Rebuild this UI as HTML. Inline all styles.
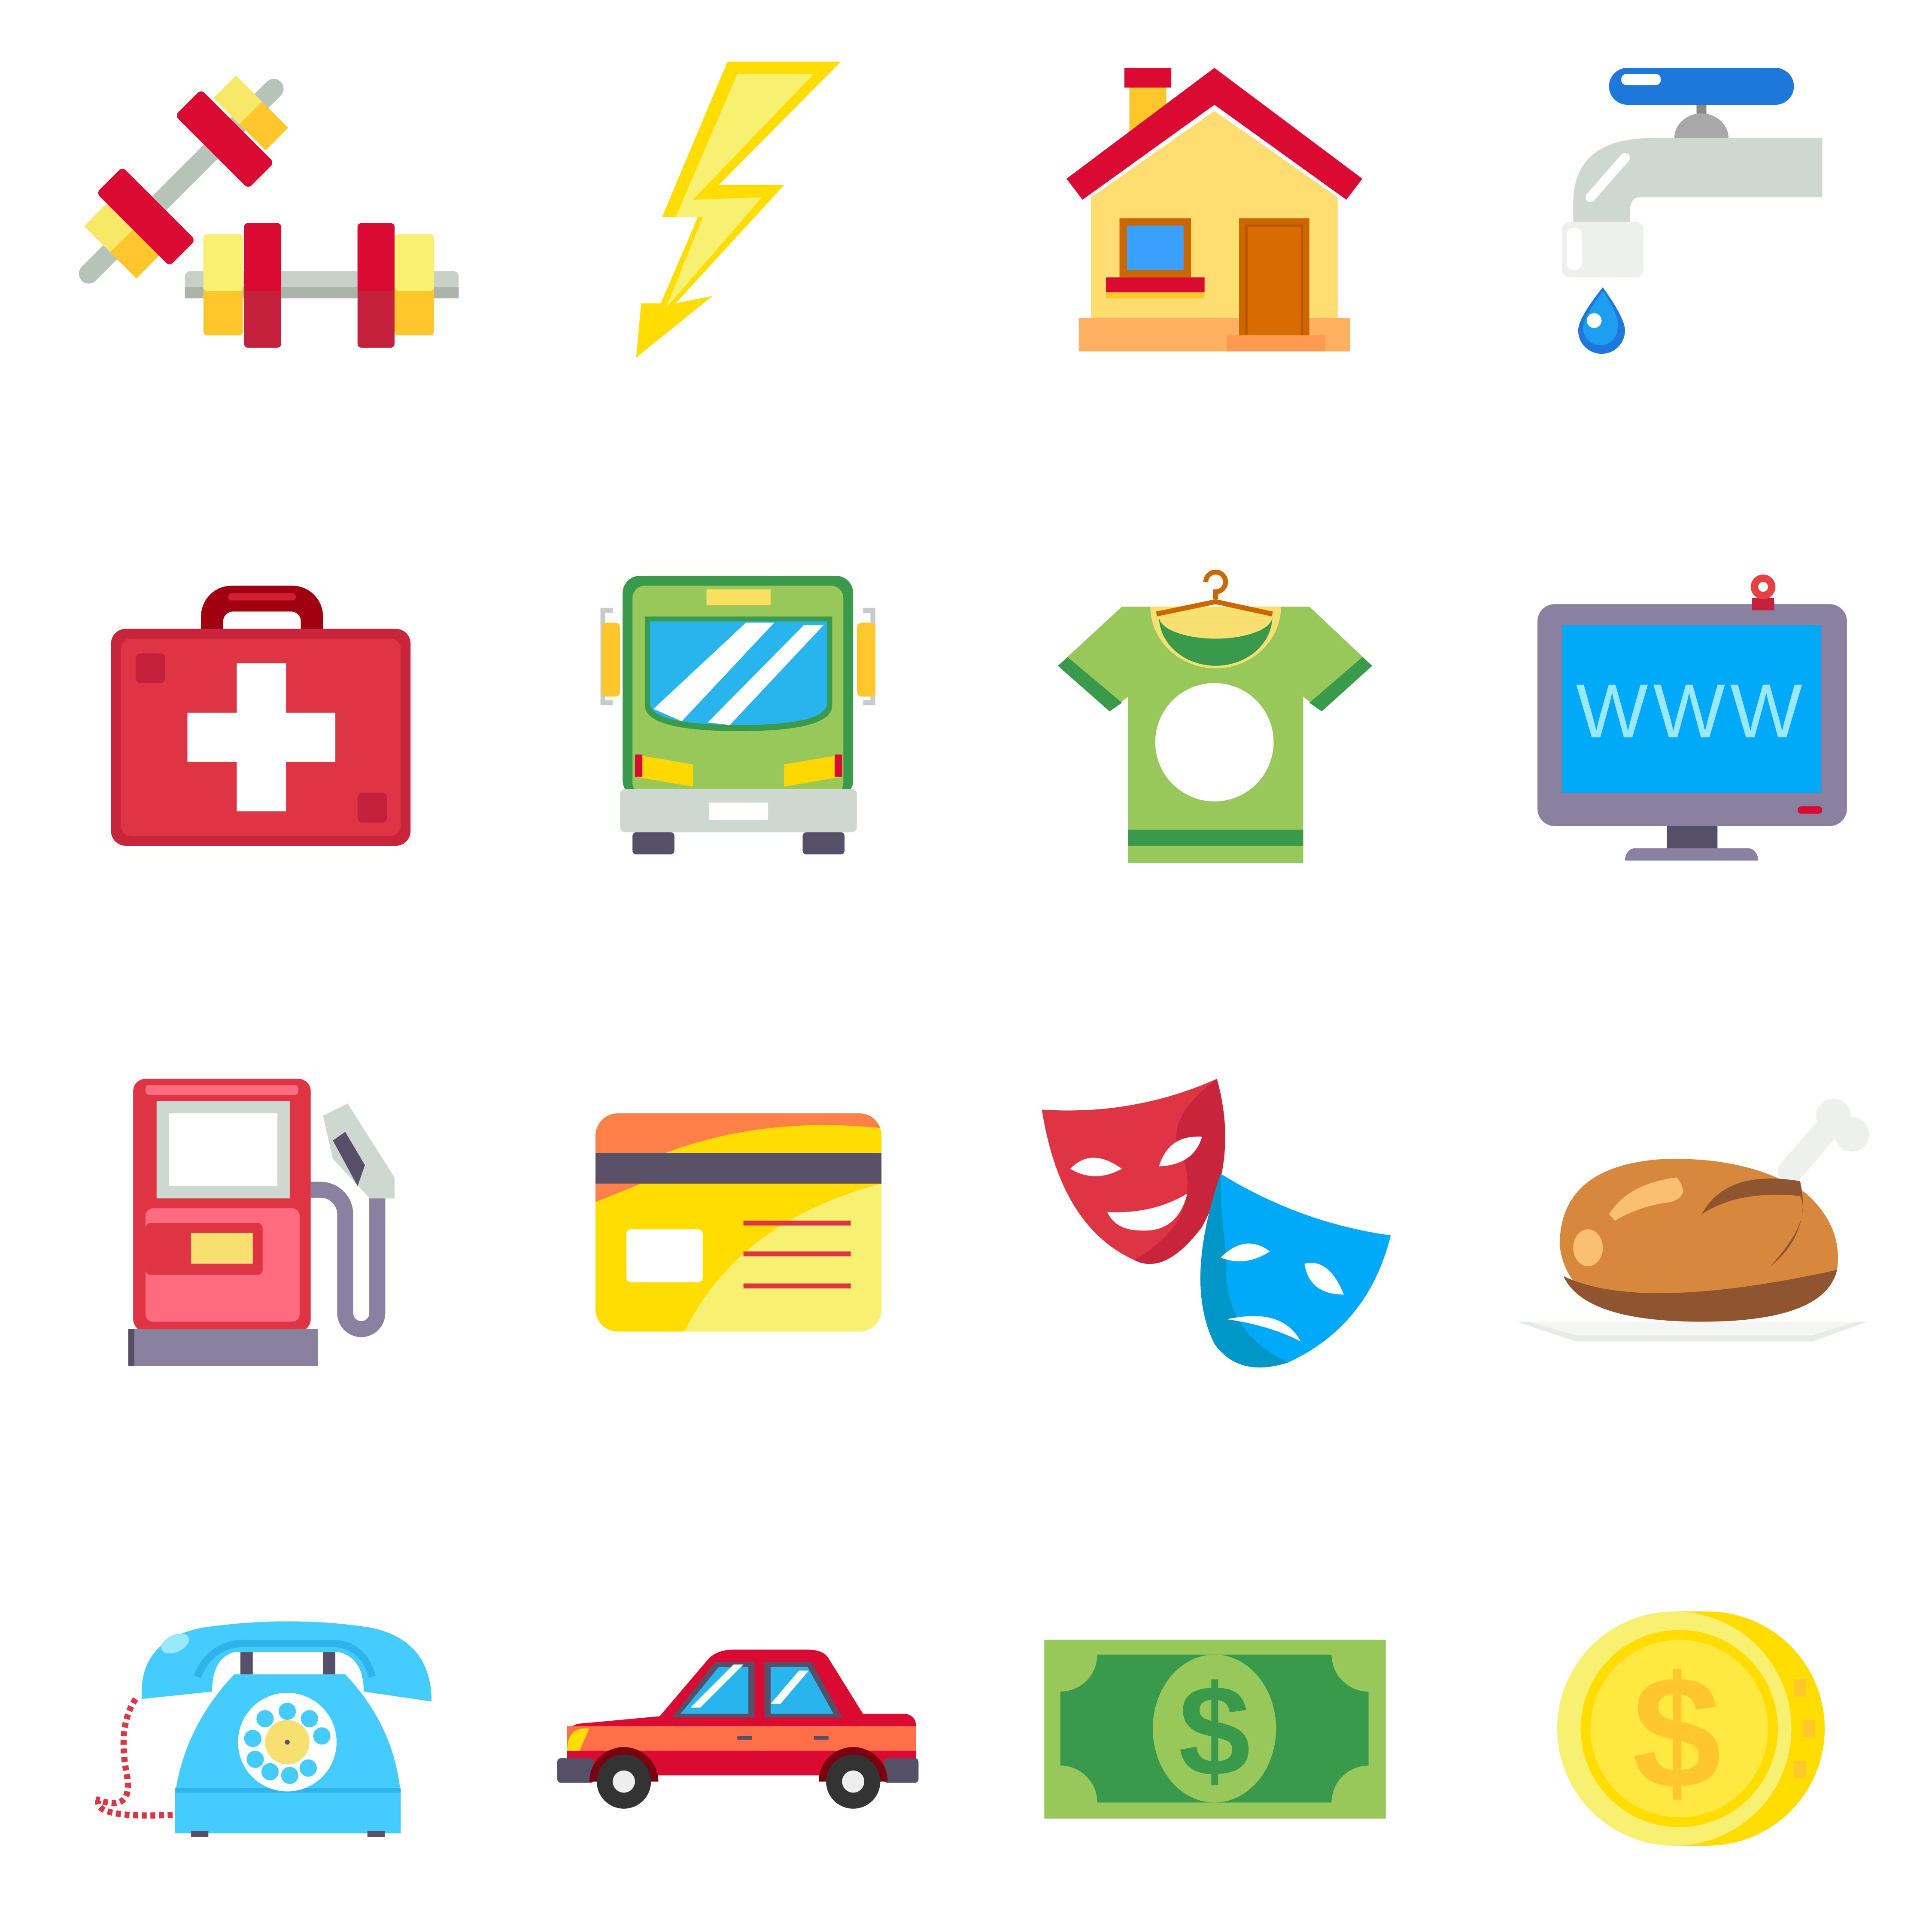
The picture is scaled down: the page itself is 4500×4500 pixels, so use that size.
<!DOCTYPE html>
<html><head><meta charset="utf-8"><style>
html,body{margin:0;padding:0;background:#fff;}
svg{display:block;}
</style></head><body>
<svg width="4500" height="4500" viewBox="0 0 1567 1567" xmlns="http://www.w3.org/2000/svg">
<rect width="1570" height="1570" fill="#fff"/>

<!-- Dumbbells -->
<g>
  <line x1="72" y1="222" x2="222" y2="72" stroke="#B7C2B8" stroke-width="16" stroke-linecap="round"/>
  <g transform="rotate(-45 112 182)">
    <rect x="80" y="152" width="26" height="60" fill="#F8E868"/>
    <rect x="80" y="182" width="26" height="30" fill="#FFC72C"/>
    <rect x="106" y="140" width="30" height="84" rx="4" fill="#DA0A32"/>
  </g>
  <g transform="rotate(-45 185 110)">
    <rect x="198" y="80" width="26" height="60" fill="#F8E868"/>
    <rect x="198" y="110" width="26" height="30" fill="#FFC72C"/>
    <rect x="166" y="68" width="30" height="84" rx="4" fill="#DA0A32"/>
  </g>
  <rect x="150" y="220" width="222" height="22" rx="4" fill="#C9D0C8"/>
  <rect x="150" y="233" width="222" height="9" fill="#AAB4AA"/>
  <rect x="165" y="190" width="32" height="82" rx="3" fill="#FFC72C"/>
  <rect x="165" y="190" width="32" height="46" rx="3" fill="#F8F070"/>
  <rect x="198" y="181" width="30" height="101" rx="3" fill="#C4203C"/>
  <rect x="198" y="181" width="30" height="55" rx="3" fill="#DA0A32"/>
  <rect x="290" y="181" width="30" height="101" rx="3" fill="#C4203C"/>
  <rect x="290" y="181" width="30" height="55" rx="3" fill="#DA0A32"/>
  <rect x="320" y="190" width="32" height="82" rx="3" fill="#FFC72C"/>
  <rect x="320" y="190" width="32" height="46" rx="3" fill="#F8F070"/>
</g>

<!-- Lightning -->
<polygon points="590,50 682,50 583,150 636,150 548,246 578,240 516,290 520,246 536,246 566,176 537,176" fill="#FFDD00"/>
<polygon points="598,60 660,60 562,162 618,160 540,250 570,176 548,176" fill="#F8F070"/>

<!-- House -->
<g>
  <rect x="916" y="68" width="30" height="40" fill="#FFC72C"/>
  <rect x="912" y="55" width="38" height="16" fill="#DA0A32"/>
  <polygon points="885,160 985,90 1085,160 1085,262 885,262" fill="#FFDD70"/>
  <rect x="875" y="258" width="220" height="27" fill="#FFB060"/>
  <polygon points="865,145 985,55 1105,145 1092,162 985,85 878,162" fill="#DA0A32"/>
  <rect x="908" y="177" width="58" height="48" fill="#CC6600"/>
  <rect x="914" y="183" width="46" height="36" fill="#3AA0FF"/>
  <rect x="897" y="225" width="80" height="12" fill="#DA0A32"/>
  <rect x="897" y="237" width="80" height="5" fill="#FFC72C"/>
  <rect x="1005" y="177" width="57" height="98" fill="#CC6600"/>
  <rect x="1011" y="183" width="45" height="92" fill="#D86C00" stroke="#B85800" stroke-width="2"/>
  <rect x="995" y="272" width="80" height="13" fill="#FF9A50"/>
</g>

<!-- Faucet -->
<g>
  <rect x="1305" y="55" width="150" height="30" rx="15" fill="#1E78DC"/>
  <rect x="1315" y="60" width="32" height="9" rx="4" fill="#fff"/>
  <rect x="1376" y="85" width="8" height="10" fill="#888"/>
  <path d="M1358,112 a22,20 0 0 1 44,0 z" fill="#A8A8A8"/>
  <path d="M1340,112 H1478 V160 H1330 Q1322,160 1322,172 V182 H1276 V165 Q1276,112 1340,112 z" fill="#CFD8D0"/>
  <path d="M1290,160 L1318,128" stroke="#fff" stroke-width="8" stroke-linecap="round"/>
  <rect x="1267" y="180" width="66" height="45" rx="6" fill="#EEF0EE"/>
  <rect x="1271" y="185" width="12" height="34" rx="5" fill="#fff"/>
  <path d="M1300,233 Q1280,258 1280,268 a19,19 0 0 0 38,0 Q1318,258 1300,233 z" fill="#1E78DC"/>
  <path d="M1300,236 Q1284,258 1284,266 a14,14 0 0 0 28,0 Q1314,256 1300,236 z" fill="#1E9EF0"/>
  <circle cx="1293" cy="260" r="6" fill="#fff"/>
</g>

<!-- First aid -->
<g>
  <path d="M163,512 V500 a25,25 0 0 1 25,-25 h49 a25,25 0 0 1 25,25 v12 h-18 v-8 a8,8 0 0 0 -8,-8 h-47 a8,8 0 0 0 -8,8 v8 z" fill="#A00010"/>
  <rect x="185" y="481" width="55" height="6" rx="3" fill="#D02030"/>
  <rect x="90" y="510" width="243" height="176" rx="12" fill="#C8243C"/>
  <rect x="98" y="518" width="227" height="160" rx="8" fill="#DE3444"/>
  <rect x="110" y="530" width="24" height="24" rx="4" fill="#C4203C"/>
  <rect x="290" y="643" width="24" height="24" rx="4" fill="#C4203C"/>
  <rect x="192" y="538" width="40" height="120" fill="#fff"/>
  <rect x="152" y="578" width="120" height="40" fill="#fff"/>
</g>

<!-- Bus -->
<g>
  <path d="M497,495 h-8 v75 h8" fill="none" stroke="#C8CCC8" stroke-width="4"/>
  <path d="M700,495 h8 v75 h-8" fill="none" stroke="#C8CCC8" stroke-width="4"/>
  <rect x="488" y="505" width="15" height="60" rx="4" fill="#FFC72C"/>
  <rect x="695" y="505" width="15" height="60" rx="4" fill="#FFC72C"/>
  <rect x="505" y="467" width="187" height="180" rx="14" fill="#3A9A4C"/>
  <rect x="513" y="475" width="171" height="170" rx="10" fill="#98C85A"/>
  <rect x="573" y="478" width="52" height="13" fill="#F8E060"/>
  <path d="M523,500 H675 V572 Q675,593 600,593 Q523,593 523,572 z" fill="#3A9A4C"/>
  <path d="M527,504 H671 V570 Q671,588 600,588 Q527,588 527,570 z" fill="#28B4EC"/>
  <polygon points="530,575 605,505 628,505 553,585" fill="#fff"/>
  <polygon points="574,586 652,507 668,507 592,588" fill="#fff"/>
  <polygon points="515,612 562,620 562,638 515,630" fill="#FFD800"/>
  <rect x="515" y="612" width="6" height="18" fill="#DA0A32"/>
  <polygon points="683,612 636,620 636,638 683,630" fill="#FFD800"/>
  <rect x="677" y="612" width="6" height="18" fill="#DA0A32"/>
  <rect x="503" y="640" width="192" height="35" rx="4" fill="#CFD8D0"/>
  <rect x="575" y="651" width="48" height="14" fill="#fff"/>
  <rect x="513" y="675" width="34" height="18" rx="3" fill="#555067"/>
  <rect x="651" y="675" width="34" height="18" rx="3" fill="#555067"/>
</g>

<!-- T-shirt -->
<g>
  <polygon points="910,492 1062,492 1113,540 1072,577 1057,565 1057,700 915,700 915,565 900,577 858,540" fill="#98C85A"/>
  <polygon points="858,540 866,533 910,570 900,577" fill="#3A9A4C"/>
  <polygon points="1113,540 1105,533 1062,570 1072,577" fill="#3A9A4C"/>
  <rect x="915" y="673" width="142" height="13" fill="#3A9A4C"/>
  <path d="M933,492 a53,50 0 0 0 106,0 z" fill="#F8E070"/>
  <path d="M940,500 a46,40 0 0 0 92,0 z" fill="#3A9A4C"/>
  <path d="M940,500 a46,18 0 0 0 92,0 z" fill="#F8E070"/>
  <path d="M986,486 v-6 a8,8 0 1 0 -8,-8" fill="none" stroke="#CC6600" stroke-width="4"/>
  <path d="M938,498 L986,488 L1032,498" fill="none" stroke="#CC6600" stroke-width="4"/>
  <circle cx="985" cy="602" r="48" fill="#fff"/>
</g>

<!-- Monitor -->
<g>
  <rect x="1352" y="668" width="41" height="22" fill="#555067"/>
  <path d="M1318,698 a8,10 0 0 1 8,-10 h92 a8,10 0 0 1 8,10 z" fill="#8A80A0"/>
  <rect x="1247" y="490" width="251" height="180" rx="14" fill="#8A80A0"/>
  <rect x="1267" y="507" width="210" height="136" fill="#00AAF8"/>
  <text x="1372" y="598" font-family="Liberation Sans, sans-serif" font-size="62" fill="#9AE8FF" text-anchor="middle" letter-spacing="4">WWW</text>
  <rect x="1458" y="654" width="20" height="6" rx="3" fill="#DA0A32"/>
  <rect x="1421" y="485" width="18" height="10" fill="#C4203C"/>
  <circle cx="1430" cy="476" r="10" fill="#E84040"/>
  <circle cx="1430" cy="476" r="4" fill="#fff"/>
</g>

<!-- Gas pump -->
<g>
  <path d="M252,965 h8 a20,20 0 0 1 20,20 v80 a13,13 0 0 0 26,0 V965" fill="none" stroke="#8A80A0" stroke-width="13"/>
  <polygon points="262,905 282,895 320,955 320,972 300,972 270,940" fill="#CFD8D0"/>
  <polygon points="270,925 280,918 296,945 290,962" fill="#555067"/>
  <rect x="108" y="875" width="144" height="205" rx="10" fill="#DE3444"/>
  <rect x="118" y="880" width="124" height="8" rx="3" fill="#FF6B7E"/>
  <rect x="127" y="893" width="108" height="79" fill="#CFD8D0"/>
  <rect x="137" y="903" width="88" height="59" fill="#fff"/>
  <rect x="118" y="980" width="125" height="92" rx="6" fill="#FF6B7E"/>
  <rect x="118" y="992" width="95" height="42" rx="4" fill="#DE3444"/>
  <rect x="155" y="1000" width="50" height="25" fill="#F8E070"/>
  <rect x="104" y="1078" width="154" height="30" fill="#8A80A0"/>
  <rect x="104" y="1078" width="5" height="30" fill="#555067"/>
</g>

<!-- Credit card -->
<g>
  <clipPath id="cc"><rect x="483" y="903" width="232" height="177" rx="18"/></clipPath>
  <g clip-path="url(#cc)">
    <rect x="483" y="903" width="232" height="177" fill="#FFDD00"/>
    <path d="M483,903 H715 V915 Q620,905 540,935 H483 z" fill="#FF8048"/>
    <path d="M715,960 V1080 H555 Q600,990 715,960 z" fill="#F8F070"/>
    <path d="M483,960 V975 L520,960 z" fill="#FF8048"/>
    <rect x="483" y="935" width="232" height="25" fill="#5A5068"/>
  </g>
  <rect x="508" y="997" width="62" height="43" rx="4" fill="#fff"/>
  <rect x="603" y="990" width="87" height="4" fill="#DE3444"/>
  <rect x="603" y="1015" width="87" height="4" fill="#DE3444"/>
  <rect x="603" y="1041" width="87" height="4" fill="#DE3444"/>
</g>

<!-- Masks -->
<g>
  <path d="M845,900 Q920,905 987,875 Q1005,940 975,995 Q945,1035 920,1022 Q860,995 845,900 z" fill="#DE3444"/>
  <path d="M987,875 Q1005,940 975,995 Q945,1035 920,1022 Q975,990 960,940 Q940,910 987,875 z" fill="#C8243C"/>
  <path d="M868,948 Q885,930 910,948 Q888,960 868,948 z" fill="#fff"/>
  <path d="M940,946 Q948,920 975,922 Q968,945 940,946 z" fill="#fff"/>
  <path d="M898,983 Q935,985 963,968 Q955,1000 925,998 Q905,998 898,983 z" fill="#fff"/>
  <path d="M990,952 Q1055,992 1128,1002 Q1110,1075 1045,1105 Q1005,1118 985,1090 Q960,1040 990,952 z" fill="#00AAF8"/>
  <path d="M990,952 Q960,1040 985,1090 Q1005,1118 1045,1105 Q990,1080 995,1020 Q990,985 990,952 z" fill="#0096C8"/>
  <path d="M990,1020 Q1010,1000 1030,1015 Q1010,1028 990,1020 z" fill="#fff"/>
  <path d="M1058,1025 Q1078,1020 1090,1050 Q1062,1050 1058,1025 z" fill="#fff"/>
  <path d="M995,1070 Q1040,1060 1055,1088 Q1030,1075 995,1070 z" fill="#fff"/>
</g>

<!-- Chicken -->
<g>
  <polygon points="1230,1072 1515,1072 1470,1088 1278,1088" fill="#E8ECE8"/>
  <polygon points="1240,1072 1505,1072 1470,1083 1278,1083" fill="#F4F6F4"/>
  <path d="M1452,950 L1485,912" stroke="#EEF0EE" stroke-width="20" stroke-linecap="round"/>
  <circle cx="1487" cy="905" r="14" fill="#EEF0EE"/>
  <circle cx="1502" cy="920" r="14" fill="#EEF0EE"/>
  <path d="M1265,1010 Q1265,945 1350,940 Q1420,938 1465,968 Q1495,995 1490,1030 Q1480,1072 1380,1072 Q1272,1072 1265,1010 z" fill="#D8883C"/>
  <path d="M1268,1035 Q1330,1065 1490,1030 Q1480,1072 1380,1072 Q1285,1072 1268,1035 z" fill="#8E5530"/>
  <path d="M1380,985 Q1400,948 1460,958 Q1470,1000 1435,1028 Q1470,990 1460,970 Q1410,965 1380,985 z" fill="#8E5530"/>
  <path d="M1305,985 Q1320,960 1360,955 Q1372,970 1355,975 Q1330,978 1310,990 z" fill="#F8C070"/>
  <ellipse cx="1288" cy="1012" rx="12" ry="15" fill="#F8C070"/>
</g>

<!-- Telephone -->
<g>
  <path d="M110,1378 Q95,1400 103,1440 Q108,1470 80,1460 Q75,1475 140,1472" fill="none" stroke="#DE3444" stroke-width="5" stroke-dasharray="4 3"/>
  <rect x="195" y="1335" width="10" height="30" fill="#555067"/>
  <rect x="262" y="1335" width="10" height="30" fill="#555067"/>
  <path d="M190,1358 H280 Q320,1400 325,1455 H142 Q150,1400 190,1358 z" fill="#44CCFF"/>
  <rect x="142" y="1450" width="183" height="37" fill="#44CCFF"/>
  <rect x="142" y="1450" width="183" height="4" fill="#2EB4EA"/>
  <rect x="155" y="1485" width="14" height="5" fill="#555067"/>
  <rect x="298" y="1485" width="14" height="5" fill="#555067"/>
  <path d="M115,1378 Q112,1330 165,1320 Q235,1310 300,1320 Q350,1330 350,1380 L295,1372 Q295,1345 275,1340 H190 Q172,1345 172,1372 z" fill="#44CCFF"/>
  <path d="M160,1360 Q170,1335 195,1333 H272 Q295,1335 302,1360" fill="none" stroke="#2EB4EA" stroke-width="6"/>
  <ellipse cx="142" cy="1333" rx="12" ry="7" fill="#9AE8FF" transform="rotate(-25 142 1333)"/>
  <circle cx="233" cy="1413" r="40" fill="#fff"/>
  <g fill="#44CCFF">
    <circle cx="233" cy="1388" r="7"/><circle cx="251" cy="1394" r="7"/><circle cx="261" cy="1408" r="7"/>
    <circle cx="215" cy="1394" r="7"/><circle cx="205" cy="1410" r="7"/><circle cx="207" cy="1427" r="7"/>
    <circle cx="219" cy="1437" r="7"/><circle cx="235" cy="1440" r="7"/><circle cx="250" cy="1434" r="7"/>
  </g>
  <circle cx="233" cy="1413" r="18" fill="#F8E070"/>
  <circle cx="233" cy="1413" r="2" fill="#555067"/>
</g>

<!-- Car -->
<g>
  <path d="M535,1392 L575,1345 Q582,1338 595,1338 H655 Q668,1338 672,1345 L700,1390 H735 Q743,1392 743,1400 V1440 H460 V1412 Q458,1400 470,1398 z" fill="#DA0A32"/>
  <rect x="460" y="1400" width="283" height="20" fill="#FF7048"/>
  <path d="M460,1420 Q460,1400 478,1402 L470,1420 z" fill="#FFDD00"/>
  <polygon points="545,1393 580,1348 612,1348 612,1393" fill="#555067"/>
  <polygon points="552,1390 583,1352 607,1352 607,1390" fill="#28B4EC"/>
  <polygon points="620,1348 658,1348 683,1393 620,1393" fill="#555067"/>
  <polygon points="625,1352 655,1352 676,1390 625,1390" fill="#28B4EC"/>
  <polygon points="560,1385 595,1350 603,1350 568,1385" fill="#fff"/>
  <polygon points="625,1382 648,1355 656,1355 633,1382" fill="#fff"/>
  <rect x="598" y="1408" width="12" height="3" fill="#555067"/>
  <rect x="660" y="1408" width="12" height="3" fill="#555067"/>
  <rect x="452" y="1426" width="30" height="20" rx="3" fill="#555067"/>
  <rect x="717" y="1426" width="28" height="20" rx="3" fill="#555067"/>
  <path d="M478,1445 a28,28 0 0 1 56,0 z" fill="#7A0010"/>
  <path d="M664,1445 a28,28 0 0 1 56,0 z" fill="#7A0010"/>
  <circle cx="506" cy="1445" r="22" fill="#333"/><circle cx="506" cy="1445" r="9" fill="#EEE"/>
  <circle cx="692" cy="1445" r="22" fill="#333"/><circle cx="692" cy="1445" r="9" fill="#EEE"/>
</g>

<!-- Bill -->
<g>
  <rect x="847" y="1330" width="277" height="145" fill="#98C85A"/>
  <path d="M890,1342 H1080 a30,30 0 0 0 30,30 V1432 a30,30 0 0 0 -30,30 H890 a30,30 0 0 0 -30,-30 V1372 a30,30 0 0 0 30,-30 z" fill="#3A9A4C"/>
  <ellipse cx="985" cy="1402" rx="50" ry="60" fill="#98C85A"/>
  <text x="985" y="1440" font-family="Liberation Sans, sans-serif" font-weight="bold" font-size="105" fill="#3A9A4C" text-anchor="middle">$</text>
</g>

<!-- Coin -->
<g>
  <circle cx="1385" cy="1402" r="95" fill="#FFDD00"/>
  <rect x="1358" y="1307" width="27" height="190" fill="#FFDD00"/>
  <g fill="#FFC72C">
    <rect x="1455" y="1362" width="10" height="14"/><rect x="1462" y="1395" width="10" height="14"/><rect x="1455" y="1428" width="10" height="14"/>
  </g>
  <circle cx="1358" cy="1402" r="95" fill="#F8F070"/>
  <circle cx="1362" cy="1402" r="80" fill="#FFDD00"/>
  <circle cx="1362" cy="1402" r="72" fill="#FFE840"/>
  <text x="1360" y="1450" font-family="Liberation Sans, sans-serif" font-weight="bold" font-size="130" fill="#FFC72C" text-anchor="middle">$</text>
</g>
</svg>
</body></html>
